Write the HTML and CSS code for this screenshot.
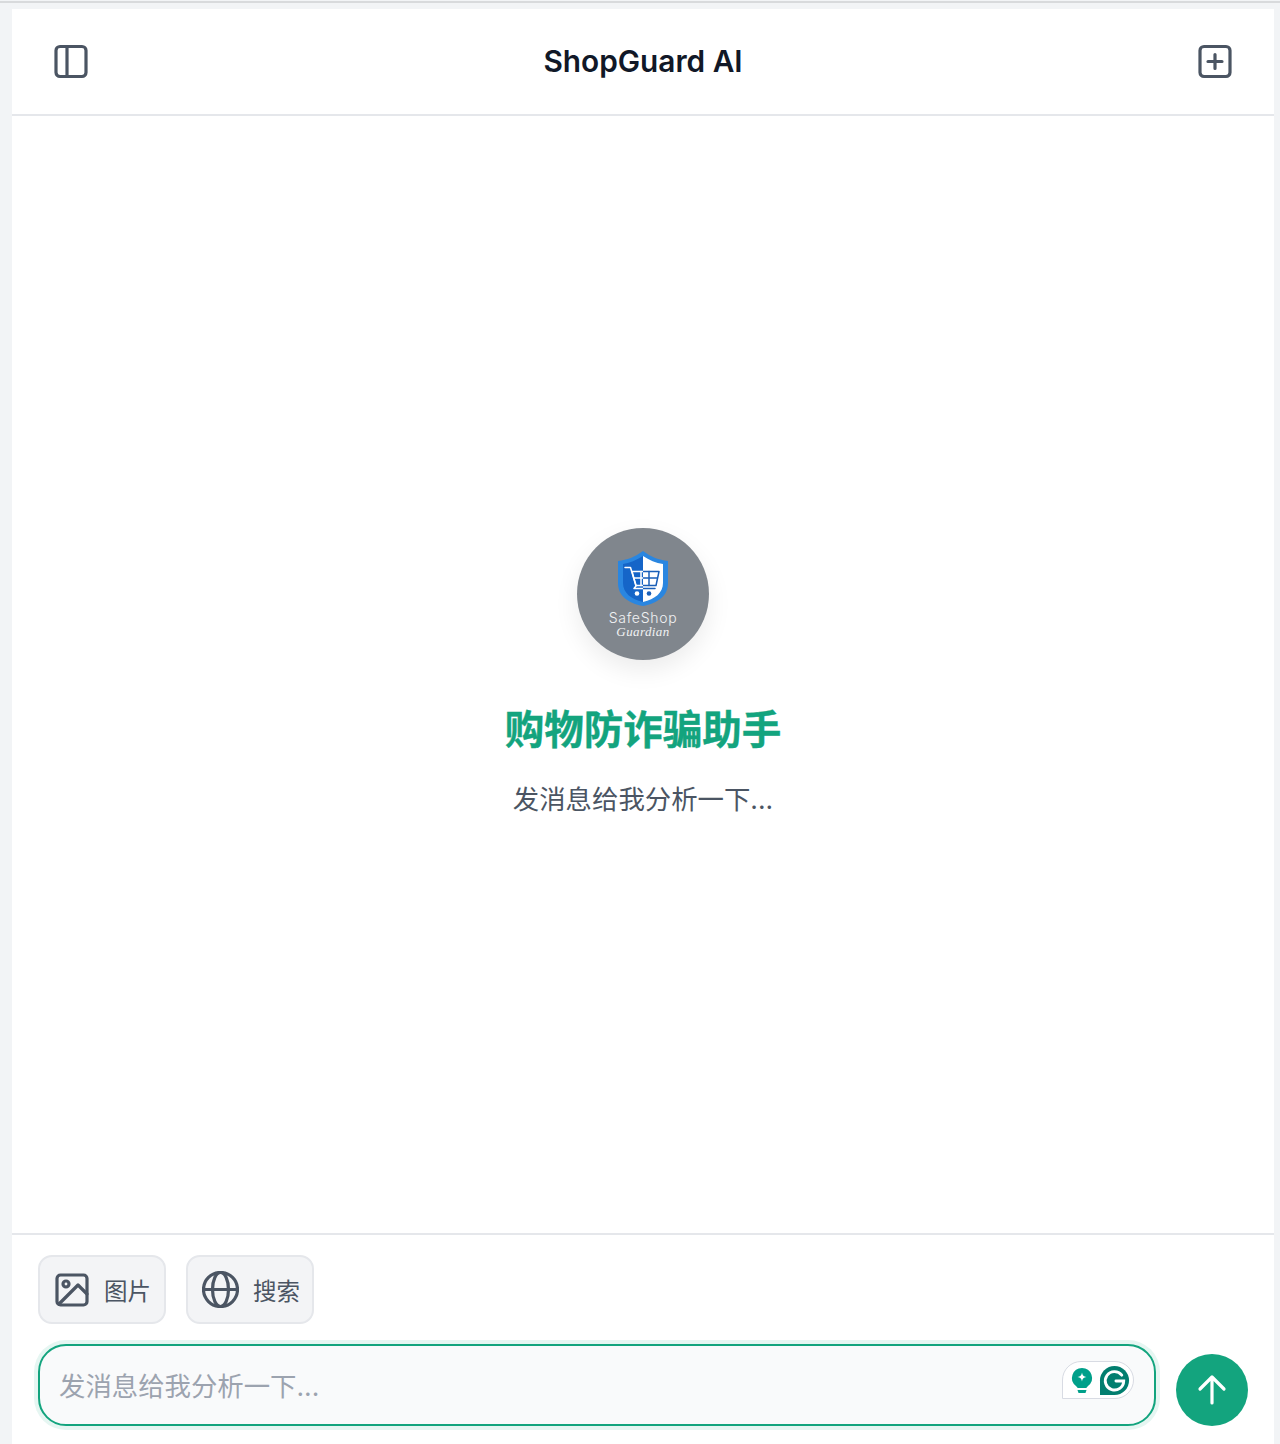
FILE: index.html
```html
<!DOCTYPE html>
<html lang="zh">
<head>
<meta charset="utf-8">
<title>ShopGuard AI</title>
<link rel="stylesheet" href="styles.css">
</head>
<body>
<div class="topline"></div>
<main class="card">
  <header class="header">
    <button class="icon-btn" aria-label="sidebar">
      <svg width="36" height="36" viewBox="0 0 36 36" fill="none" stroke="#4b5563" stroke-width="3.200" stroke-linejoin="round"><rect x="3" y="3.500" width="30" height="30" rx="4"/><path d="M14 3.500v30"/></svg>
    </button>
    <h1 class="title">ShopGuard AI</h1>
    <button class="icon-btn" aria-label="new">
      <svg width="36" height="36" viewBox="0 0 36 36" fill="none" stroke="#4b5563" stroke-width="3.200" stroke-linecap="round"><rect x="3" y="3.500" width="30" height="30" rx="4"/><path d="M18 11.500v14M11 18.500h14"/></svg>
    </button>
  </header>
  <section class="welcome">
    <div class="logo">
      <svg width="132" height="132" viewBox="0 0 132 132">
        <defs>
          <clipPath id="left-half"><rect x="0" y="0" width="66" height="132"/></clipPath>
          <clipPath id="right-half"><rect x="66" y="0" width="66" height="132"/></clipPath>
          <g id="cart" fill="none" stroke-width="1.500" stroke-linejoin="round" stroke-linecap="round">
            <path d="M48 39.500h5.500l5.500 18.500-2 2.500h21"/>
            <path d="M55 43.500H82L79 57.500H59Z"/>
            <path d="M64 43.500v14M72 43.500v14M80 50H57"/>
          </g>
        </defs>
        <path d="M66 23 C74 29 82 32 91 33 V55 C91 68 81 75 66 78 C51 75 41 68 41 55 V33 C50 32 58 29 66 23Z" fill="#2a86e0"/>
        <path d="M66 28 C60 32 52 35 46 36 V55 C46 65 54 71 66 74Z" fill="#1565c8"/>
        <path d="M66 28 C72 32 79 35 86 36 V55 C86 65 78 71 66 74Z" fill="#fff"/>
        <use href="#cart" stroke="#fff" clip-path="url(#left-half)"/>
        <use href="#cart" stroke="#1a5fb8" clip-path="url(#right-half)"/>
        <circle cx="60" cy="65.500" r="2.300" fill="#fff"/>
        <circle cx="72" cy="65.500" r="2.300" fill="#1a5fb8"/>
        <text x="66" y="95" text-anchor="middle" class="logo-name">SafeShop</text>
        <text x="66" y="108" text-anchor="middle" class="logo-script">Guardian</text>
      </svg>
    </div>
    <h2 class="headline">购物防诈骗助手</h2>
    <p class="subtitle">发消息给我分析一下...</p>
  </section>
  <footer class="composer">
    <div class="tools">
      <button class="tool">
        <svg width="36" height="36" viewBox="0 0 36 36" fill="none" stroke="#4b5563" stroke-width="3.200" stroke-linecap="round" stroke-linejoin="round"><rect x="3" y="3" width="30" height="30" rx="3.500"/><circle cx="12" cy="12" r="3"/><path d="M33 22 24 13 5 32"/></svg>
        <span>图片</span>
      </button>
      <button class="tool">
        <svg width="37" height="37" viewBox="0 0 37 37" fill="none" stroke="#4b5563" stroke-width="3.200"><circle cx="18.500" cy="18.500" r="17"/><path d="M1.500 18.500h34"/><ellipse cx="18.500" cy="18.500" rx="8" ry="17"/></svg>
        <span>搜索</span>
      </button>
    </div>
    <div class="input-row">
      <div class="input">
        <span class="placeholder">发消息给我分析一下...</span>
        <div class="grammarly">
          <svg width="24" height="30" viewBox="0 0 24 30"><path d="M12 3a10 10 0 0 0-6 18c1 1 1.500 1.500 1.500 2h9c0-.5.5-1 1.500-2a10 10 0 0 0-6-18Z" fill="#00a08a"/><path d="M12 7.500c.6 3 1.500 3.900 4.500 4.500-3 .6-3.900 1.500-4.500 4.500-.6-3-1.500-3.900-4.500-4.500 3-.6 3.900-1.500 4.500-4.500Z" fill="#fff"/><path d="M7.500 25h9l-1 3h-7Z" fill="#00a08a"/></svg>
          <svg width="31" height="31" viewBox="0 0 32 32"><path d="M16 1a15 15 0 0 1 0 30H1V16A15 15 0 0 1 16 1Z" fill="#027e6f"/><path d="M23.500 10.500A9.500 9.500 0 1 0 25.500 16.500H17.500" fill="none" stroke="#fff" stroke-width="3" stroke-linecap="round"/></svg>
        </div>
      </div>
      <button class="send" aria-label="send">
        <svg width="32" height="32" viewBox="0 0 32 32" fill="none" stroke="#fff" stroke-width="3.200" stroke-linecap="round" stroke-linejoin="round"><path d="M16 29V4M4 15 16 3l12 12"/></svg>
      </button>
    </div>
  </footer>
</main>
</body>
</html>
```
FILE: styles.css
```css
* { box-sizing: border-box; }
html, body { margin: 0; height: 100%; }
body {
  background: #f2f4f6;
  font-family: Inter, "Noto Sans CJK SC", sans-serif;
  display: flex;
  flex-direction: column;
  height: 1444px;
  overflow: hidden;
}
.topline { height: 2px; margin-top: 1px; background: #d8dadc; flex: none; }
.card {
  flex: 1;
  min-height: 0;
  margin: 6px 6px 0 12px;
  background: #fff;
  display: flex;
  flex-direction: column;
}
.header {
  height: 107px;
  flex: none;
  border-bottom: 2px solid #e5e7eb;
  display: flex;
  align-items: center;
  justify-content: space-between;
  padding: 0 41px 1px 41px;
}
.icon-btn { width: 36px; height: 36px; padding: 0; border: 0; background: none; display: block; }
.icon-btn svg { display: block; }
.title { margin: 0; font-size: 29.800px; line-height: 36px; font-weight: 600; color: #111827; }
.welcome {
  flex: 1;
  min-height: 0;
  display: flex;
  flex-direction: column;
  align-items: center;
  padding-top: 412px;
}
.logo {
  width: 132px;
  height: 132px;
  border-radius: 50%;
  background: #80868d;
  box-shadow: 0 10px 25px rgba(0,0,0,.08);
  overflow: hidden;
}
.logo svg { display: block; }
.logo-name { font-family: Inter, sans-serif; font-size: 14px; font-weight: 300; letter-spacing: .7px; fill: #f1f2f3; }
.logo-script { font-family: "Liberation Serif", serif; font-style: italic; font-size: 13px; letter-spacing: .4px; fill: #f1f2f3; }
.headline {
  margin: 44px 0 0;
  font-size: 39.500px;
  line-height: 52px;
  font-weight: 700;
  color: #13a47e;
  -webkit-text-stroke: .4px #13a47e;
}
.subtitle { margin: 22px 0 0; font-size: 26.400px; line-height: 42px; color: #4b5563; }
.composer {
  flex: none;
  height: 211px;
  border-top: 2px solid #e5e7eb;
  padding: 20px 26px 0;
}
.tools { display: flex; gap: 20px; }
.tool {
  width: 128px;
  height: 69px;
  padding: 0 0 0 14px;
  display: flex;
  align-items: center;
  gap: 14px;
  border: 2px solid #e5e7eb;
  border-radius: 14px;
  background: #f3f4f6;
  font: inherit;
  font-size: 23.500px;
  color: #4b5563;
}
.tool svg { flex: none; }
.input-row { display: flex; gap: 20px; margin-top: 20px; align-items: flex-end; }
.input {
  flex: 1;
  height: 82px;
  border: 2px solid #13a47e;
  border-radius: 28px;
  background: #f9fafb;
  box-shadow: 0 0 0 4px #e6f6f2;
  display: flex;
  align-items: center;
  justify-content: space-between;
  padding: 0 20px 0 19px;
}
.placeholder { font-size: 26.400px; color: #9ca3af; padding-bottom: 2px; }
.grammarly {
  width: 72px;
  height: 38px;
  margin-bottom: 10px;
  background: #fff;
  border: 1px solid #d8dbe3;
  border-radius: 19px 19px 19px 0;
  display: flex;
  align-items: center;
  gap: 5px;
  padding-left: 7px;
}
.send {
  width: 72px;
  height: 72px;
  padding: 0;
  border: 0;
  border-radius: 50%;
  background: #13a47e;
  display: flex;
  align-items: center;
  justify-content: center;
}
```
